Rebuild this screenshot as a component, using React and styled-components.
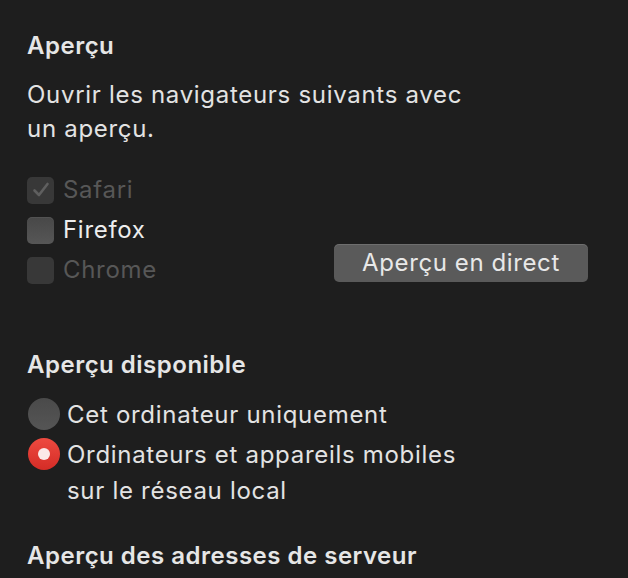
import React from "react";
import styled, { createGlobalStyle } from "styled-components";

const Global = createGlobalStyle`
  html, body { margin: 0; padding: 0; background: #1e1e1e; }
  body { font-family: Inter, "Noto Sans", sans-serif; -webkit-font-smoothing: antialiased; }
`;

const Page = styled.div`
  width: 628px;
  height: 578px;
  overflow: hidden;
  background: #1e1e1e;
  padding: 29px 0 0 27px;
  box-sizing: border-box;
  display: flex;
  flex-direction: column;
  color: #e3e3e3;
  font-size: 24px;
  letter-spacing: 0.7px;
  line-height: 34px;
`;

const Heading = styled.div`
  font-weight: 600;
  color: #e6e6e6;
  letter-spacing: 0.5px;
  margin-top: ${(p) => p.$mt || 0}px;
`;

const Para = styled.div`
  margin-top: 15px;
  width: 480px;
`;

const OptionsRow = styled.div`
  margin-top: 24px;
  display: flex;
  align-items: flex-end;
`;

const CheckList = styled.div`
  display: flex;
  flex-direction: column;
  width: 307px;
`;

const CheckRow = styled.label`
  height: 40px;
  display: flex;
  align-items: center;
  gap: 9px;
  color: ${(p) => (p.$disabled ? "#575757" : "#ededed")};
`;

const Box = styled.span`
  width: 27px;
  height: 27px;
  border-radius: 5px;
  box-sizing: border-box;
  display: flex;
  align-items: center;
  justify-content: center;
  background: ${(p) =>
    p.$disabled ? "#383838" : "linear-gradient(#484848, #565656)"};
  box-shadow: ${(p) =>
    p.$disabled ? "none" : "inset 0 1px 0 rgba(255,255,255,0.06)"};
`;

const Button = styled.button`
  margin-bottom: 8px;
  width: 254px;
  height: 38px;
  border: none;
  border-radius: 5px;
  background: #5a5a5a;
  box-shadow: inset 0 1px 0 rgba(255, 255, 255, 0.12);
  color: #e8e8e8;
  font-family: inherit;
  font-size: 24px;
  letter-spacing: 0.6px;
  line-height: 38px;
  padding: 0;
`;

const RadioGroup = styled.div`
  margin-top: 12px;
  display: flex;
  flex-direction: column;
`;

const RadioRow = styled.label`
  display: flex;
  align-items: flex-start;
  gap: 7px;
  padding-top: 3px;
  min-height: 40px;
  box-sizing: border-box;
`;

const RadioDot = styled.span`
  flex: none;
  margin-left: 1px;
  margin-top: 1px;
  width: 32px;
  height: 32px;
  border-radius: 50%;
  display: flex;
  align-items: center;
  justify-content: center;
  background: ${(p) =>
    p.$on
      ? "linear-gradient(#ee4a40, #d42c26)"
      : "linear-gradient(#4a4a4a, #555555)"};
  &::after {
    content: "";
    display: ${(p) => (p.$on ? "block" : "none")};
    width: 12px;
    height: 12px;
    border-radius: 50%;
    background: #fbe9e8;
  }
`;

const RadioText = styled.span`
  line-height: 36px;
`;

const Check = () => (
  <svg width="20" height="20" viewBox="0 0 20 20">
    <path
      d="M3.5 10.5 L8 15 L16.5 4"
      fill="none"
      stroke="#5f5f5f"
      strokeWidth="2.6"
      strokeLinecap="round"
      strokeLinejoin="round"
    />
  </svg>
);

export default function App() {
  return (
    <Page>
      <Global />
      <Heading>Aperçu</Heading>
      <Para>
        Ouvrir les navigateurs suivants avec
        <br />
        un aperçu.
      </Para>
      <OptionsRow>
        <CheckList>
          <CheckRow $disabled>
            <Box $disabled>
              <Check />
            </Box>
            Safari
          </CheckRow>
          <CheckRow>
            <Box />
            Firefox
          </CheckRow>
          <CheckRow $disabled>
            <Box $disabled />
            Chrome
          </CheckRow>
        </CheckList>
        <Button>Aperçu en direct</Button>
      </OptionsRow>
      <Heading $mt={58}>Aperçu disponible</Heading>
      <RadioGroup>
        <RadioRow>
          <RadioDot />
          <RadioText>Cet ordinateur uniquement</RadioText>
        </RadioRow>
        <RadioRow>
          <RadioDot $on />
          <RadioText>
            Ordinateurs et appareils mobiles
            <br />
            sur le réseau local
          </RadioText>
        </RadioRow>
      </RadioGroup>
      <Heading $mt={30}>Aperçu des adresses de serveur</Heading>
    </Page>
  );
}
